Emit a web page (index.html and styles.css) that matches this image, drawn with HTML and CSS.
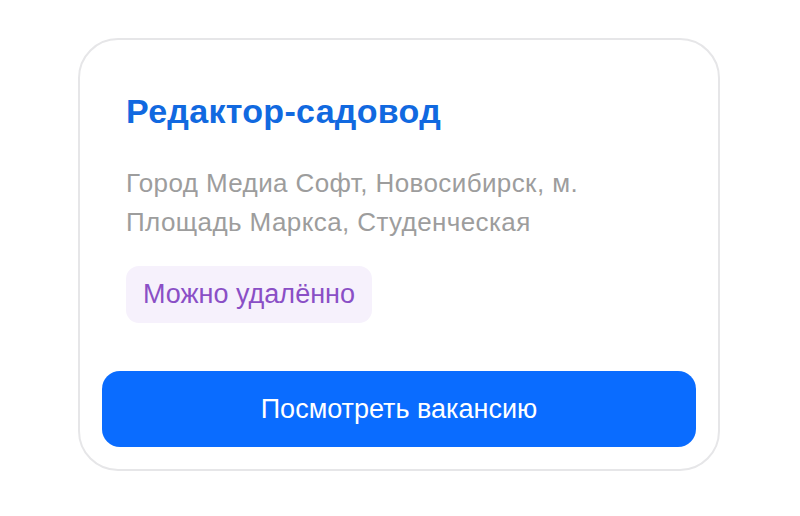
FILE: index.html
```html
<!DOCTYPE html>
<html lang="ru">
<head>
    <meta charset="UTF-8">
    <meta name="viewport" content="width=device-width, initial-scale=1.0">
    <title>Вакансия</title>
    <link rel="stylesheet" href="styles.css">
</head>
<body>
    <div class="vacancy-card">
        <div class="vacancy-info">
            <h1 class="vacancy-title">Редактор-садовод</h1>
            <p class="vacancy-address">Город Медиа Софт, Новосибирск, м. Площадь Маркса, Студенческая</p>
            <span class="vacancy-tag">Можно удалённо</span>
        </div>
        <button class="vacancy-button">Посмотреть вакансию</button>
    </div>
</body>
</html>
```

FILE: styles.css
```css
body {
    margin: 0;
    padding: 38px 0 0 78px;
    background-color: #fff;
    font-family: "Liberation Sans", Arial, sans-serif;
}

.vacancy-card {
    width: 642px;
    height: 433px;
    box-sizing: border-box;
    border: 2px solid #e6e6e8;
    border-radius: 40px;
    padding: 0 22px;
    display: flex;
    flex-direction: column;
}

.vacancy-info {
    padding: 51px 24px 0;
    flex: 1;
}

.vacancy-title {
    margin: 0;
    color: #1169e0;
    font-size: 34px;
    line-height: 40px;
    letter-spacing: 0.3px;
    font-weight: bold;
}

.vacancy-address {
    margin: 33px 0 0;
    width: 480px;
    color: #9d9d9d;
    font-size: 26px;
    line-height: 39px;
    letter-spacing: 0.4px;
}

.vacancy-tag {
    display: inline-block;
    margin-top: 24px;
    padding: 0 17px;
    height: 57px;
    line-height: 57px;
    border-radius: 13px;
    background-color: #f6f1fc;
    color: #8a4fc6;
    font-size: 27px;
}

.vacancy-button {
    margin-bottom: 22px;
    height: 76px;
    border: none;
    border-radius: 18px;
    background-color: #0a6cff;
    color: #fff;
    font-family: inherit;
    font-size: 27px;
    cursor: pointer;
}
```
